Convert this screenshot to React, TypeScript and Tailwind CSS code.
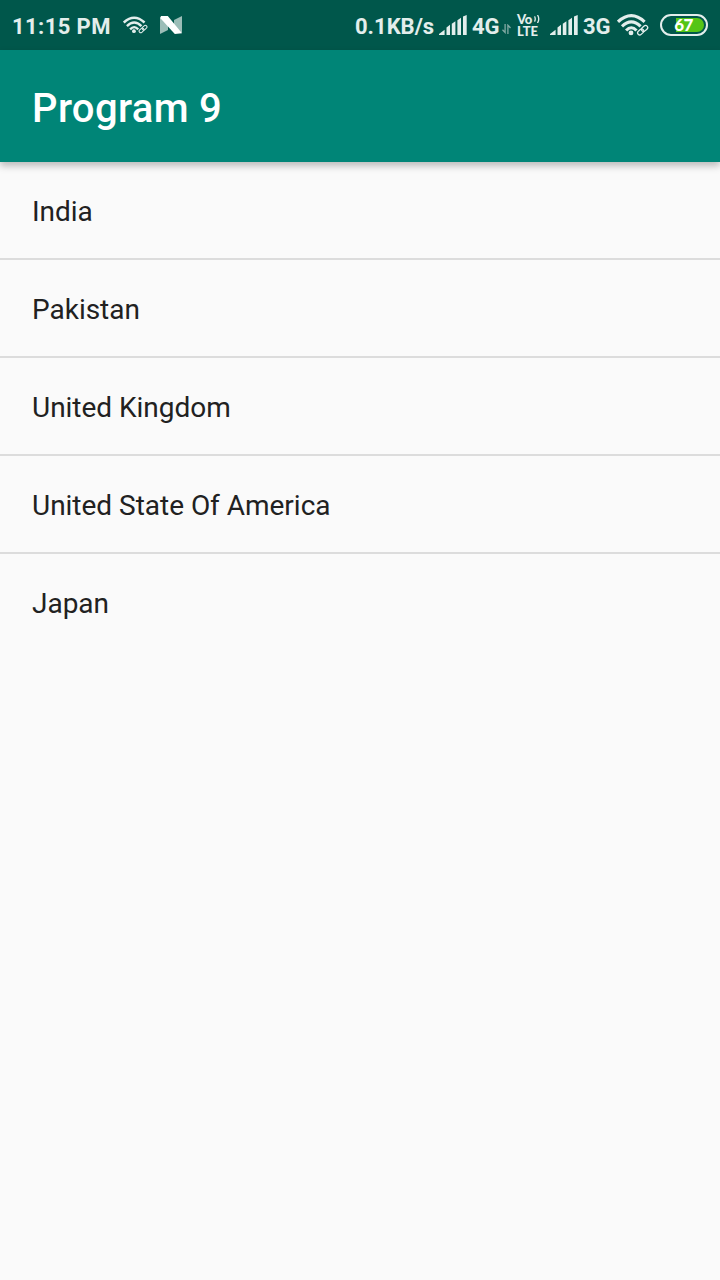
const countries = ['India', 'Pakistan', 'United Kingdom', 'United State Of America', 'Japan'];

function WifiLink({ className }: { className: string }) {
  return (
    <svg className={className} viewBox="0 0 32 22" fill="none" stroke="#e3eeec">
      <path d="M1 7.8Q14.3 -4.4 27.6 7.8" strokeWidth="3.1" />
      <path d="M5 12.3Q14.3 3.4 23.6 12.3" strokeWidth="3.1" />
      <path d="M9.1 16.5Q14.3 11 19.5 16.5" strokeWidth="3.1" />
      <circle cx="14" cy="18.9" r="2.4" fill="#e3eeec" stroke="none" />
      <g transform="rotate(-42 26 16)" strokeWidth="1.3">
        <rect x="19.6" y="13.8" width="6.8" height="4.2" rx="2.1" />
        <rect x="24.8" y="13.8" width="6.8" height="4.2" rx="2.1" />
      </g>
    </svg>
  );
}

function Signal() {
  return (
    <svg className="h-5 w-7 shrink-0" viewBox="0 0 28 20" fill="#e3eeec">
      <path d="M0 20V19L5.6 14.7V20ZM7.5 20V12.4L11 9.8V20ZM12.8 20V8.8L16.4 6.3V20ZM18.4 20V5.2L22 2.8V20ZM24 20V1.6L27.7 0V20Z" />
    </svg>
  );
}

function StatusBar() {
  return (
    <div className="flex h-[50px] items-center bg-[#00574b] pl-3 text-[22px] font-bold leading-[50px] text-[#e3eeec]">
      <span className="w-[111px] whitespace-nowrap pt-[3px] tracking-[0.4px]">11:15 PM</span>
      <WifiLink className="h-[18px] w-[25px] shrink-0" />
      <svg className="ml-3 h-[18px] w-[23px]" viewBox="0 0 23 18">
        <path d="M0 1.2L8 6V14L0 18ZM14 4L22 0V17L14 12Z" fill="#9bbdb7" />
        <path d="M1 0H7.8L22 17.2L14.8 18L.2 2Z" fill="#fff" />
      </svg>
      <div className="ml-auto flex items-center">
        <span className="w-[84px] whitespace-nowrap pt-[3px]">0.1KB/s</span>
        <Signal />
        <span className="ml-[5px] w-[30px] pt-[3px]">4G</span>
        <svg className="mt-2 h-2.5 w-[9px]" viewBox="0 0 9 10" fill="none" stroke="#82aaa4" strokeWidth="1.3">
          <path d="M3.1 0V8.5L.5 5.8M5.9 10V1.2L8.5 4" />
        </svg>
        <div className="ml-1.5 flex h-[23px] w-[23px] flex-col justify-between font-[Lato] text-[13px] font-black leading-[11px]">
          <div className="flex h-[11px] items-center">
            <span className="w-[17px] tracking-[-0.2px]">Vo</span>
            <svg className="h-2 w-1.5" viewBox="0 0 6 8" fill="none" stroke="#e3eeec" strokeWidth="1.3">
              <path d="M.5 1.4Q2 4 .5 6.6M3.5 0Q6 4 3.5 8" />
            </svg>
          </div>
          <span className="h-[11px]">LTE</span>
        </div>
        <div className="ml-2.5 flex"><Signal /></div>
        <span className="ml-[5px] w-[34px] pt-[3px]">3G</span>
        <WifiLink className="h-[22px] w-8 shrink-0" />
        <div className="ml-[11px] mr-3 flex h-[22px] w-12 rounded-full border-2 border-[#e3eeec] p-0.5">
          <div className="flex w-full items-center justify-center rounded-full bg-[linear-gradient(90deg,transparent_12px,#55c516_12px)] pb-0.5 pr-px font-[Lato] text-[17px] font-black leading-none tracking-[-0.5px] text-white">
            67
          </div>
        </div>
      </div>
    </div>
  );
}

export default function App() {
  return (
    <div className="min-h-screen overflow-hidden bg-[#fafafa] font-[Roboto,sans-serif]">
      <StatusBar />
      <header className="flex h-28 items-center bg-[#008577] pl-8 pt-1.5 text-[40px] font-medium tracking-[0.35px] text-white shadow-[0_4px_7px_rgba(0,0,0,0.25)]">
        <h1>Program 9</h1>
      </header>
      <ul className="divide-y-2 divide-[#dcdcdc]">
        {countries.map((country) => (
          <li key={country} className="h-[98px] pl-8 pt-px text-[28px] leading-[97px] tracking-[-0.02px] text-[#212121]">
            {country}
          </li>
        ))}
      </ul>
    </div>
  );
}
